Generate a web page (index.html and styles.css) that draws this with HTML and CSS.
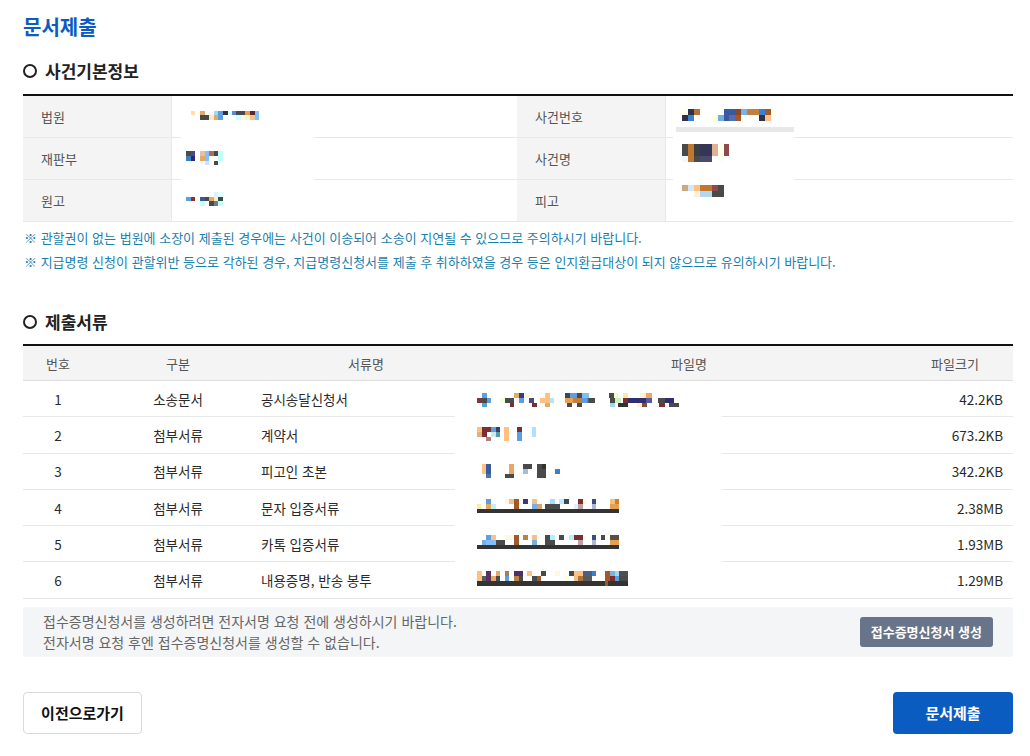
FILE: index.html
```html
<!DOCTYPE html>
<html lang="ko">
<head>
<meta charset="utf-8">
<title>문서제출</title>
<link rel="stylesheet" href="styles.css">
</head>
<body>
<div class="page">
  <h1 class="title">문서제출</h1>

  <h2 class="sec">사건기본정보</h2>
  <div class="info">
    <div class="lab">법원</div>
    <div class="val"><span class="cover cover-l"></span><span class="mz mz-court"></span></div>
    <div class="lab">사건번호</div>
    <div class="val"><span class="cover cover-r cover-top"><span class="mz-line"></span></span><span class="mz mz-caseno"></span></div>

    <div class="lab">재판부</div>
    <div class="val"><span class="cover cover-l"></span><span class="mz mz-dept"></span></div>
    <div class="lab">사건명</div>
    <div class="val"><span class="cover cover-r"></span><span class="mz mz-casename"></span></div>

    <div class="lab">원고</div>
    <div class="val"><span class="mz mz-plaintiff"></span></div>
    <div class="lab">피고</div>
    <div class="val"><span class="mz mz-defendant"></span></div>
  </div>

  <ul class="notes">
    <li>※ 관할권이 없는 법원에 소장이 제출된 경우에는 사건이 이송되어 소송이 지연될 수 있으므로 주의하시기 바랍니다.</li>
    <li>※ 지급명령 신청이 관할위반 등으로 각하된 경우, 지급명령신청서를 제출 후 취하하였을 경우 등은 인지환급대상이 되지 않으므로 유의하시기 바랍니다.</li>
  </ul>

  <h2 class="sec sec-2">제출서류</h2>
  <div class="docs">
    <div class="row head">
      <div class="c-no">번호</div>
      <div class="c-type">구분</div>
      <div class="c-name">서류명</div>
      <div class="c-file">파일명</div>
      <div class="c-size">파일크기</div>
    </div>
    <div class="row">
      <div class="c-no">1</div>
      <div class="c-type">소송문서</div>
      <div class="c-name">공시송달신청서</div>
      <div class="c-file"><span class="cover cover-f"></span><span class="mz mz-f1"></span></div>
      <div class="c-size">42.2KB</div>
    </div>
    <div class="row">
      <div class="c-no">2</div>
      <div class="c-type">첨부서류</div>
      <div class="c-name">계약서</div>
      <div class="c-file"><span class="cover cover-f"></span><span class="mz mz-f2"></span></div>
      <div class="c-size">673.2KB</div>
    </div>
    <div class="row">
      <div class="c-no">3</div>
      <div class="c-type">첨부서류</div>
      <div class="c-name">피고인 초본</div>
      <div class="c-file"><span class="cover cover-f"></span><span class="mz mz-f3"></span></div>
      <div class="c-size">342.2KB</div>
    </div>
    <div class="row">
      <div class="c-no">4</div>
      <div class="c-type">첨부서류</div>
      <div class="c-name">문자 입증서류</div>
      <div class="c-file"><span class="cover cover-f"></span><span class="mz mz-f4"></span></div>
      <div class="c-size">2.38MB</div>
    </div>
    <div class="row">
      <div class="c-no">5</div>
      <div class="c-type">첨부서류</div>
      <div class="c-name">카톡 입증서류</div>
      <div class="c-file"><span class="cover cover-f"></span><span class="mz mz-f5"></span></div>
      <div class="c-size">1.93MB</div>
    </div>
    <div class="row">
      <div class="c-no">6</div>
      <div class="c-type">첨부서류</div>
      <div class="c-name">내용증명, 반송 봉투</div>
      <div class="c-file"><span class="mz mz-f6"></span></div>
      <div class="c-size">1.29MB</div>
    </div>
  </div>

  <div class="notice">
    <div class="notice-text">
      <p>접수증명신청서를 생성하려면 전자서명 요청 전에 생성하시기 바랍니다.</p>
      <p>전자서명 요청 후엔 접수증명신청서를 생성할 수 없습니다.</p>
    </div>
    <button class="btn-gen" type="button">접수증명신청서 생성</button>
  </div>

  <div class="actions">
    <button class="btn btn-prev" type="button">이전으로가기</button>
    <button class="btn btn-submit" type="button">문서제출</button>
  </div>
</div>
</body>
</html>
```

FILE: styles.css
```css
* { box-sizing: border-box; }
html, body { margin: 0; padding: 0; background: #fff; }
body {
  font-family: "Noto Sans CJK KR", "Noto Sans", sans-serif;
  color: #333;
}
.page {
  width: 990px;
  margin-left: 23px;
  padding-top: 13px;
}
.title {
  margin: 0;
  font-size: 20px;
  line-height: 28px;
  font-weight: 700;
  color: #0b5cc0;
}
.sec {
  margin: 18px 0 0;
  display: flex;
  align-items: center;
  gap: 8px;
  font-size: 17px;
  line-height: 24px;
  font-weight: 700;
  color: #222;
}
.sec::before {
  content: "";
  width: 10px;
  height: 10px;
  border: 2.5px solid #222;
  border-radius: 50%;
  flex: none;
}
.sec-2 { margin-top: 36px; }

/* case info grid */
.info {
  margin-top: 11px;
  border-top: 2px solid #111;
  display: grid;
  grid-template-columns: 149px 345px 149px 347px;
}
.info > div {
  height: 42px;
  border-bottom: 1px solid #e8e8e8;
  position: relative;
}
.info .lab {
  background: #f4f4f4;
  border-right: 1px solid #e8e8e8;
  padding-left: 18px;
  display: flex;
  align-items: center;
  font-size: 13px;
  color: #555;
}
.cover {
  position: absolute;
  background: #fff;
  bottom: -1px;
}
.cover-l { left: 9px; width: 133px; top: 30px; }
.cover-r { left: 7px; width: 121px; top: 30px; }
.mz-line {
  display: block;
  margin: 1px 0 0 3px;
  height: 5px;
  background: #e8e8e8;
}
.mz {
  position: relative;
  display: block;
  background-repeat: no-repeat;
}

.mz-court {
  width: 68px; height: 9px; margin: 15px 0 0 19px;
  background:
    linear-gradient(90deg, #ffe0a0 0 4px, transparent 4px 9px, #e8a860 9px 14px, transparent 14px 23px, #a0d8f0 23px 27px, #5aa0e0 27px 32px, #333 32px 37px, #e0ffff 37px 41px, #5090d0 41px 45px, #4a4a4a 45px 54px, #e0a050 54px 59px, #5a2a2a 59px 64px, #80c0ff 64px 68px) top / 100% 4px no-repeat,
    linear-gradient(90deg, transparent 0 9px, #4a4a4a 9px 18px, #ffe8c0 18px 23px, #e8a860 23px 27px, #5aa0e0 27px 32px, transparent 32px 45px, #c8ffff 45px 50px, #fff8e0 50px 54px, #fff0d0 54px 59px, #f0c090 59px 64px, #80c0ff 64px 68px) bottom / 100% 5px no-repeat;
}
.mz-dept {
  width: 37px; height: 14px; margin: 13px 0 0 14px;
  background:
    linear-gradient(90deg, #4a4a4a 0 5px, #4a4a80 5px 9px, transparent 9px 14px, #e8c0a0 14px 19px, #80c0ff 19px 23px, #b07050 23px 28px, #4a4a4a 28px 32px, #c0ffff 32px 37px) 0 0 / 100% 5px no-repeat,
    linear-gradient(90deg, #3a80c0 0 5px, #2a2a70 5px 9px, transparent 9px 14px, #e8a860 14px 19px, #80c0ff 19px 23px, transparent 23px 32px, #c0ffff 32px 37px) 0 5px / 100% 5px no-repeat,
    linear-gradient(90deg, transparent 0 19px, #d0e0ff 19px 23px, transparent 23px 28px, #4a4a4a 28px 32px, transparent 32px) 0 10px / 100% 4px no-repeat;
}
.mz-plaintiff {
  width: 37px; height: 14px; margin: 12px 0 0 14px;
  background:
    linear-gradient(90deg, transparent 0 28px, #e0f0ff 28px 32px, #e0ffff 32px 37px) 0 0 / 100% 5px no-repeat,
    linear-gradient(90deg, #5aa0e0 0 5px, #8a3030 5px 9px, transparent 9px 14px, #3a5a90 14px 19px, #4a4a4a 19px 23px, #e8a860 23px 28px, #fff0c0 28px 32px, #3a4a4a 32px 37px) 0 5px / 100% 4px no-repeat,
    linear-gradient(90deg, transparent 0 14px, #c0ffff 14px 19px, transparent 19px 23px, #4a4a4a 23px 28px, #708080 28px 32px, #c0ffff 32px 37px) 0 9px / 100% 5px no-repeat;
}
.mz-caseno {
  width: 95px; height: 12px; margin: 13px 0 0 16px;
  background:
    linear-gradient(90deg, #fffff0 0 6px, #30304a 6px 12px, #b87030 12px 18px, transparent 18px 42px, #3a5aa0 42px 53px, #8a4a2a 53px 59px, #80b0e0 59px 65px, #c08040 65px 77px, #3a80d0 77px 83px, #a05a2a 83px 89px, #fffff0 89px 95px) top / 100% 6px no-repeat,
    linear-gradient(90deg, #30304a 0 6px, #3a80d0 6px 12px, transparent 12px 30px, #ffffe0 30px 36px, #70b0e0 36px 42px, #3a5aa0 42px 47px, #5070b0 47px 53px, #a05a2a 53px 59px, transparent 59px 77px, #30304a 77px 83px, #ffc080 83px 89px, transparent 89px 95px) bottom / 100% 6px no-repeat;
}
.mz-casename {
  width: 47px; height: 18px; margin: 6px 0 0 16px;
  background:
    linear-gradient(90deg, #4a4a4a 0 6px, #c07830 6px 12px, #3a4040 12px 18px, #35355a 18px 30px, #e0b090 30px 36px, #fffff0 36px 42px, #904a4a 42px 47px) top / 100% 12px no-repeat,
    linear-gradient(90deg, #f0f8ff 0 6px, #c07830 6px 12px, #4a4a4a 12px 18px, #4a4a6a 18px 30px, transparent 30px 36px, #fffff0 36px 42px, transparent 42px 47px) bottom / 100% 6px no-repeat;
}
.mz-defendant {
  width: 42px; height: 12px; margin: 5px 0 0 16px;
  background:
    linear-gradient(90deg, #d0a880 0 6px, #d0e8f8 6px 12px, #ffc080 12px 18px, #c07830 18px 30px, #904a4a 30px 36px, #4a4a4a 36px 42px) top / 100% 6px no-repeat,
    linear-gradient(90deg, transparent 0 12px, #fff0d8 12px 18px, #b0d8f0 18px 30px, #4a4a4a 30px 42px) bottom / 100% 6px no-repeat;
}

.notes {
  margin: 4px 0 0;
  padding: 0 0 0 1px;
  list-style: none;
  font-size: 13px;
  line-height: 24px;
  color: #1a7fad;
}

/* documents table */
.docs {
  margin-top: 10px;
  border-top: 2px solid #111;
}
.docs .row {
  display: grid;
  grid-template-columns: 70px 158px 220px 426px 116px;
  height: 36.3px;
  border-bottom: 1px solid #e8e8e8;
  font-size: 13.5px;
  color: #2a2a2a;
}
.docs .row > div {
  display: flex;
  align-items: center;
  position: relative;
}
.docs .head {
  height: 35px;
  background: #f4f4f4;
  border-bottom-color: #dedede;
  color: #555;
  font-size: 13px;
}
.c-no { justify-content: center; }
.c-type { justify-content: center; padding-left: 12px; }
.c-name { padding-left: 10px; }
.c-size { justify-content: flex-end; padding-right: 10px; }
.head .c-name, .head .c-file { justify-content: center; padding-left: 10px; }
.head .c-size { justify-content: center; padding-right: 0; }
.docs .row:not(.head) > .c-file { align-items: flex-start; }
.cover-f { left: -16px; width: 267px; top: 0; }

.mz-f1 {
  width: 202px; height: 14px; margin: 12px 0 0 6px;
  background:
    linear-gradient(90deg, transparent 0 5px, #5aa0e0 5px 10px, transparent 10px 37px, #e8a860 37px 42px, #3a3a80 42px 47px, #fff8e0 47px 52px, transparent 52px 68px, #ffc080 68px 73px, transparent 73px 88px, #3a4a50 88px 93px, #5aa0e0 93px 100px, #4a4a4a 100px 105px, #80c0f0 105px 112px, transparent 112px 132px, #4a4a4a 132px 137px, #f0ffc0 137px 141px, transparent 141px 146px, #ffe8a0 146px 151px, transparent 151px 163px, #fff0d0 163px 169px, #e8a860 169px 175px, transparent 175px) 0 0 / 100% 5px no-repeat,
    linear-gradient(90deg, #7a3a3a 0 5px, #4a4a4a 5px 10px, #5aa0e0 10px 14px, transparent 14px 23px, #f0ffe0 23px 28px, #4a4a4a 28px 37px, transparent 37px 42px, #5aa0e0 42px 47px, transparent 47px 52px, #4a4a80 52px 57px, transparent 57px 63px, #ffc080 63px 73px, #b0e8f8 73px 77px, transparent 77px 88px, #e8a050 88px 96px, #c08040 96px 105px, #5aa0e0 105px 110px, #4a4a4a 112px 118px, transparent 118px 133px, #4a4a4a 133px 138px, #d0f0c0 138px 144px, transparent 144px 146px, #7a3030 146px 151px, #2e2e70 151px 169px, #5a5aa0 169px 175px, transparent 175px 181px, #4a4a4a 181px 188px, #2e2e70 188px 197px, transparent 197px) 0 5px / 100% 5px no-repeat,
    linear-gradient(90deg, transparent 0 5px, #5aa0e0 5px 10px, transparent 10px 33px, #7a3030 33px 37px, transparent 37px 55px, #7a3030 55px 60px, transparent 60px 68px, #e8a860 68px 73px, transparent 73px 90px, #4a4a4a 90px 95px, transparent 95px 100px, #4a4a4a 100px 105px, transparent 105px 133px, #a0d8f0 133px 138px, transparent 138px 141px, #333 141px 151px, transparent 151px 160px, #fff0d0 160px 165px, #8a4a3a 165px 170px, transparent 170px 182px, #7a3030 182px 188px, transparent 188px 192px, #4a4a4a 192px 202px) 0 10px / 100% 4px no-repeat;
}
.mz-f2 {
  width: 59px; height: 14px; margin: 10px 0 0 6px;
  background:
    linear-gradient(90deg, #ffc080 0 5px, #7a3030 5px 14px, #5aa0e0 14px 19px, #3a3a70 19px 23px, transparent 23px 27px, #ffc080 27px 32px, transparent 32px 40px, #7a3030 40px 45px, transparent 45px 55px, #b0e0ff 55px 59px) 0 0 / 100% 5px no-repeat,
    linear-gradient(90deg, #e0b080 0 5px, #7a3030 5px 10px, transparent 10px 14px, #d0e8f0 14px 19px, #50a0a0 19px 23px, transparent 23px 27px, #ffc080 27px 32px, transparent 32px 40px, #5aa0e0 40px 45px, transparent 45px 55px, #b0e0ff 55px 59px) 0 5px / 100% 5px no-repeat,
    linear-gradient(90deg, transparent 0 9px, #b08080 9px 14px, transparent 14px 27px, #ffc080 27px 32px, transparent 32px 40px, #5aa0e0 40px 45px, transparent 45px) 0 10px / 100% 4px no-repeat;
}
.mz-f3 {
  width: 83px; height: 14px; margin: 10px 0 0 6px;
  background:
    linear-gradient(90deg, transparent 0 5px, #ffc080 5px 9px, #3a5aa0 9px 14px, transparent 14px 32px, #e8a860 32px 37px, transparent 37px 46px, #4a4a4a 46px 55px, transparent 55px 60px, #4a4a4a 60px 65px, #3a3030 65px 69px, transparent 69px) 0 0 / 100% 5px no-repeat,
    linear-gradient(90deg, transparent 0 5px, #ffc080 5px 9px, #3a5aa0 9px 14px, transparent 14px 32px, #e8a860 32px 37px, transparent 37px 46px, #a0c0d8 46px 51px, transparent 51px 60px, #4a4a4a 60px 69px, transparent 69px 78px, #3a80d0 78px 83px) 0 5px / 100% 5px no-repeat,
    linear-gradient(90deg, transparent 0 9px, #5070b0 9px 14px, transparent 14px 28px, #4a4a4a 28px 37px, transparent 37px 60px, #4a4a4a 60px 69px, transparent 69px) 0 10px / 100% 4px no-repeat;
}
.mz-f4 {
  width: 142px; height: 14px; margin: 9px 0 0 6px;
  background:
    linear-gradient(90deg, transparent 0 9px, #5aa0e0 9px 14px, transparent 14px 28px, #fff8e0 28px 32px, #f0c090 32px 37px, #a05a2a 37px 42px, transparent 42px 46px, #3a3a80 46px 51px, transparent 51px 55px, #f0c090 55px 60px, transparent 60px 73px, #a0e0f8 73px 78px, transparent 78px 82px, #b0f0ff 82px 87px, #3a4a50 87px 92px, transparent 92px 101px, #7a3030 101px 106px, #fff8e0 106px 110px, transparent 110px 115px, #3a4a90 115px 119px, transparent 119px 133px, #f0c080 133px 138px, #d08030 138px 142px) 0 0 / 100% 5px no-repeat,
    linear-gradient(90deg, #ffe8b0 0 4px, transparent 4px 9px, #e8a860 9px 14px, #c0f0f8 14px 19px, transparent 19px 37px, #a05a2a 37px 42px, transparent 42px 55px, #7ab0e0 55px 60px, #e0a060 60px 65px, transparent 65px 68px, #4a4a4a 68px 83px, transparent 83px 97px, #e0f0ff 97px 101px, #c0a0a0 101px 106px, transparent 106px 115px, #b0b8d0 115px 119px, transparent 119px 133px, #e8a050 133px 142px) 0 5px / 100% 5px no-repeat,
    linear-gradient(#333, #333) 0 10px / 100% 4px no-repeat;
}
.mz-f5 {
  width: 142px; height: 14px; margin: 9px 0 0 6px;
  background:
    linear-gradient(90deg, transparent 0 9px, #5aa0e0 9px 14px, #ffc080 14px 19px, transparent 19px 28px, #fff8e0 28px 37px, #a05a2a 37px 42px, transparent 42px 46px, #c08040 46px 51px, transparent 51px 55px, #f0c090 55px 60px, transparent 60px 68px, #4a4a4a 68px 73px, #b0f0ff 73px 78px, transparent 78px 82px, #4a4a4a 82px 87px, transparent 87px 92px, #b0f0ff 92px 97px, #7a3030 97px 106px, transparent 106px 115px, #3a4a90 115px 119px, transparent 119px 124px, #4a4a4a 124px 128px, transparent 128px 133px, #5a5040 133px 142px) 0 0 / 100% 5px no-repeat,
    linear-gradient(90deg, transparent 0 5px, #7ab0e8 5px 9px, #80c0ff 9px 19px, #4a4a4a 19px 28px, transparent 28px 37px, #a05a2a 37px 42px, transparent 42px 55px, #7ab0e0 55px 60px, transparent 60px 68px, #4a4a4a 68px 78px, transparent 78px 101px, #c0a0a0 101px 106px, transparent 106px 115px, #b0b8d0 115px 119px, transparent 119px 133px, #e8a050 133px 142px) 0 5px / 100% 5px no-repeat,
    linear-gradient(#333, #333) 0 10px / 100% 4px no-repeat;
}
.mz-f6 {
  width: 151px; height: 15px; margin: 9px 0 0 6px;
  background:
    linear-gradient(90deg, #ffc080 0 5px, transparent 5px 9px, #5a3060 9px 14px, transparent 14px 19px, #e8a860 19px 23px, transparent 23px 28px, #a08050 28px 32px, transparent 32px 37px, #4a3070 37px 46px, transparent 46px 50px, #ffc080 50px 55px, transparent 55px 64px, #4a4a4a 64px 69px, transparent 69px 78px, #fff8e0 78px 83px, transparent 83px 92px, #4a4a4a 92px 97px, #ffc080 97px 106px, #4a6080 106px 115px, #3a80d0 115px 119px, transparent 119px 128px, #a05a2a 128px 133px, #80b0e0 133px 138px, #a0d8f0 138px 142px, #4a5050 142px 151px) 0 0 / 100% 5px no-repeat,
    linear-gradient(90deg, #ffc080 0 5px, #5a5a5a 5px 9px, #5a3060 9px 14px, #e8a860 14px 19px, #4a4a4a 19px 23px, transparent 23px 28px, #5aa0e0 28px 32px, transparent 32px 37px, #c08040 37px 42px, #4a4a4a 42px 46px, transparent 46px 55px, #4a4a4a 55px 60px, #a05a2a 60px 64px, transparent 64px 88px, #ffffe0 88px 92px, transparent 92px 97px, #f0c090 97px 101px, #b07040 101px 106px, #5a5a5a 106px 115px, transparent 115px 128px, #a05a2a 128px 133px, #7a3030 133px 138px, #5aa0e0 138px 142px, #4a4a4a 142px 151px) 0 5px / 100% 5px no-repeat,
    linear-gradient(90deg, #333 0 128px, #a05a2a 128px 131px, #333 131px 151px) 0 10px / 100% 5px no-repeat;
}

/* notice box */
.notice {
  margin-top: 8px;
  height: 50px;
  padding: 0 20px;
  background: #f4f5f7;
  border-radius: 3px;
  display: flex;
  align-items: center;
  justify-content: space-between;
}
.notice p {
  margin: 0;
  font-size: 14px;
  line-height: 21px;
  color: #666;
}
.btn-gen {
  height: 30px;
  padding: 0 11px;
  border: none;
  border-radius: 3px;
  background: #677489;
  color: #fff;
  font-family: inherit;
  font-size: 13px;
  font-weight: 700;
}

/* action buttons */
.actions {
  margin-top: 35px;
  display: flex;
  justify-content: space-between;
}
.btn {
  height: 42px;
  border-radius: 4px;
  font-family: inherit;
  font-size: 15px;
  font-weight: 700;
}
.btn-prev {
  width: 119px;
  background: #fff;
  border: 1px solid #d9d9d9;
  color: #111;
}
.btn-submit {
  width: 120px;
  background: #0b5cc0;
  border: none;
  color: #fff;
}
```
